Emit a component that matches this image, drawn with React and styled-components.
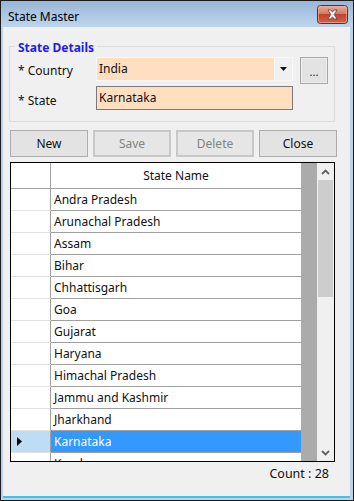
import styled, { createGlobalStyle } from "styled-components";

const GlobalStyle = createGlobalStyle`
  html, body {
    margin: 0;
    padding: 0;
    background: #ffffff;
  }
  body {
    font-family: "Noto Sans", "Open Sans", sans-serif;
    font-size: 12px;
    color: #111111;
  }
`;

const states = [
  "Andra Pradesh",
  "Arunachal Pradesh",
  "Assam",
  "Bihar",
  "Chhattisgarh",
  "Goa",
  "Gujarat",
  "Haryana",
  "Himachal Pradesh",
  "Jammu and Kashmir",
  "Jharkhand",
  "Karnataka",
  "Kerala",
];

const CloseGlyph = () => (
  <svg width="31" height="19" viewBox="0 0 31 19">
    <defs>
      <linearGradient id="redg" x1="0" y1="0" x2="0" y2="1">
        <stop offset="0" stopColor="#e9b0a2" />
        <stop offset="0.45" stopColor="#d47864" />
        <stop offset="0.5" stopColor="#c2432b" />
        <stop offset="1" stopColor="#d0654a" />
      </linearGradient>
    </defs>
    <rect x="0.5" y="0.5" width="30" height="18" rx="3" fill="url(#redg)" stroke="#6b2a1f" />
    <rect x="1.5" y="1.5" width="28" height="16" rx="2" fill="none" stroke="#f0b8a8" strokeOpacity="0.6" />
    <path
      d="M11 5 L14 5 L15.5 7.2 L17 5 L20 5 L17.2 9.5 L20 14 L17 14 L15.5 11.8 L14 14 L11 14 L13.8 9.5 Z"
      fill="#ffffff"
      stroke="#5a3a34"
      strokeWidth="0.8"
      strokeLinejoin="round"
    />
  </svg>
);

const DownTriangle = () => (
  <svg width="7" height="4" viewBox="0 0 7 4">
    <path d="M0 0 L7 0 L3.5 4 Z" fill="#111" />
  </svg>
);

const RowPointer = () => (
  <svg width="5" height="9" viewBox="0 0 5 9">
    <path d="M0 0 L5 4.5 L0 9 Z" fill="#000" />
  </svg>
);

const Chevron = ({ down }) => (
  <svg width="9" height="6" viewBox="0 0 9 6">
    <path
      d={down ? "M1 1 L4.5 4.5 L8 1" : "M1 5 L4.5 1.5 L8 5"}
      fill="none"
      stroke="#606060"
      strokeWidth="1.8"
    />
  </svg>
);

const Window = styled.div`
  width: 354px;
  height: 501px;
  box-sizing: border-box;
  border: 1px solid #1c1c1c;
  background: #bcd3ec;
  display: flex;
  flex-direction: column;
  overflow: hidden;
`;

const TitleBar = styled.div`
  height: 26px;
  flex: none;
  display: flex;
  justify-content: space-between;
  align-items: flex-start;
  padding: 4px 5px 0 7px;
  box-sizing: border-box;
  background: linear-gradient(#99b6d6, #b0c9e5 60%, #bdd4ec);
`;

const Title = styled.span`
  margin-top: 2px;
  font-size: 12px;
  line-height: 20px;
  color: #000;
`;

const Client = styled.div`
  flex: 1;
  margin: 0 3px 0 2px;
  background: #f0f0f0;
  display: flex;
  flex-direction: column;
  border-bottom: 2px solid #3ec4ec;
  margin-bottom: 2px;
`;

const GroupBox = styled.div`
  position: relative;
  margin: 19px 0 0 6px;
  width: 326px;
  box-sizing: border-box;
  border: 1px solid #dcdcdc;
  padding: 10px 0 11px 8px;
  display: grid;
  grid-template-columns: 78px 197px 28px;
  grid-template-rows: 24px 24px;
  row-gap: 5px;
  column-gap: 0;
`;

const Legend = styled.span`
  position: absolute;
  top: -7px;
  left: 5px;
  padding: 0 3px;
  background: #f0f0f0;
  color: #1e1ee6;
  font-weight: bold;
  line-height: 16px;
`;

const Label = styled.span`
  display: flex;
  align-items: center;
  padding-top: ${(p) => p.$down || 0}px;
  line-height: 16px;
`;

const Combo = styled.div`
  display: flex;
  box-sizing: border-box;
  border: 1px solid #f8f8f8;
  background: #ffdfbf;
`;

const ComboText = styled.span`
  flex: 1;
  padding-left: 2px;
  line-height: 22px;
`;

const ComboButton = styled.span`
  width: 17px;
  background: #f0f0f0;
  border-left: 1px solid #ffffff;
  display: flex;
  align-items: center;
  justify-content: center;
`;

const TextBox = styled.div`
  box-sizing: border-box;
  border: 1px solid #7a7a7a;
  background: #ffdfc0;
  padding-left: 2px;
  line-height: 22px;
`;

const EllipsisButton = styled.div`
  margin-left: 7px;
  width: 28px;
  height: 27px;
  box-sizing: border-box;
  border: 1px solid #a8a8a8;
  box-shadow: inset 0 0 0 1px #ececec;
  background: #e3e3e3;
  display: flex;
  justify-content: center;
  align-items: flex-end;
  padding-bottom: 5px;
  line-height: 12px;
  font-size: 11px;
`;

const ButtonRow = styled.div`
  display: flex;
  gap: 5px;
  margin: 8px 0 0 7px;
`;

const Button = styled.div`
  width: 78px;
  height: 27px;
  box-sizing: border-box;
  display: flex;
  align-items: center;
  justify-content: center;
  border: ${(p) => (p.$disabled ? "2px solid #c8c8c8" : "1px solid #adadad")};
  background: ${(p) => (p.$disabled ? "#e6e6e6" : "#e3e3e3")};
  color: ${(p) => (p.$disabled ? "#838383" : "#111")};
`;

const GridFrame = styled.div`
  margin: 5px 0 0 7px;
  width: 325px;
  height: 300px;
  box-sizing: border-box;
  border: 1px solid #000;
  display: flex;
  overflow: hidden;
`;

const GridBody = styled.div`
  width: 306px;
  background: #ababab;
  display: flex;
  flex-direction: column;
  overflow: hidden;
`;

const Row = styled.div`
  display: flex;
  flex: none;
  height: ${(p) => (p.$header ? 26 : 22)}px;
`;

const RowHead = styled.div`
  width: 40px;
  box-sizing: border-box;
  border-bottom: 1px solid ${(p) => (p.$header ? "#a0a0a0" : "#e2e2e2")};
  border-right: 1px solid #a0a0a0;
  background: ${(p) => (p.$selected ? "#bedcf4" : "#ffffff")};
  display: flex;
  align-items: center;
  padding-left: 6px;
`;

const Cell = styled.div`
  width: 250px;
  box-sizing: border-box;
  border-bottom: 1px solid #a0a0a0;
  background: ${(p) => (p.$selected ? "#3399ff" : "#ffffff")};
  color: ${(p) => (p.$selected ? "#ffffff" : "#111")};
  display: flex;
  align-items: center;
  justify-content: ${(p) => (p.$header ? "center" : "flex-start")};
  padding-left: ${(p) => (p.$header ? 0 : 3)}px;
`;

const ScrollBar = styled.div`
  width: 17px;
  background: #f0f0f0;
  display: flex;
  flex-direction: column;
`;

const ScrollArrow = styled.div`
  height: 17px;
  flex: none;
  display: flex;
  align-items: center;
  justify-content: center;
`;

const Track = styled.div`
  flex: 1;
  padding: 0 1px;
`;

const Thumb = styled.div`
  height: 117px;
  background: #cdcdcd;
`;

const Count = styled.div`
  align-self: flex-end;
  margin: 4px 21px 0 0;
  line-height: 16px;
  font-size: 12.5px;
`;

export default function App() {
  const selected = "Karnataka";
  return (
    <>
      <GlobalStyle />
      <Window>
        <TitleBar>
          <Title>State Master</Title>
          <CloseGlyph />
        </TitleBar>
        <Client>
          <GroupBox>
            <Legend>State Details</Legend>
            <Label $down={3}>* Country</Label>
            <Combo>
              <ComboText>India</ComboText>
              <ComboButton>
                <DownTriangle />
              </ComboButton>
            </Combo>
            <EllipsisButton>...</EllipsisButton>
            <Label $down={6}>* State</Label>
            <TextBox>Karnataka</TextBox>
          </GroupBox>

          <ButtonRow>
            <Button>New</Button>
            <Button $disabled>Save</Button>
            <Button $disabled>Delete</Button>
            <Button>Close</Button>
          </ButtonRow>

          <GridFrame>
            <GridBody>
              <Row $header>
                <RowHead $header />
                <Cell $header>State Name</Cell>
              </Row>
              {states.map((s) => (
                <Row key={s}>
                  <RowHead $selected={s === selected}>
                    {s === selected && <RowPointer />}
                  </RowHead>
                  <Cell $selected={s === selected}>{s}</Cell>
                </Row>
              ))}
            </GridBody>
            <ScrollBar>
              <ScrollArrow>
                <Chevron />
              </ScrollArrow>
              <Track>
                <Thumb />
              </Track>
              <ScrollArrow>
                <Chevron down />
              </ScrollArrow>
            </ScrollBar>
          </GridFrame>

          <Count>Count : 28</Count>
        </Client>
      </Window>
    </>
  );
}
